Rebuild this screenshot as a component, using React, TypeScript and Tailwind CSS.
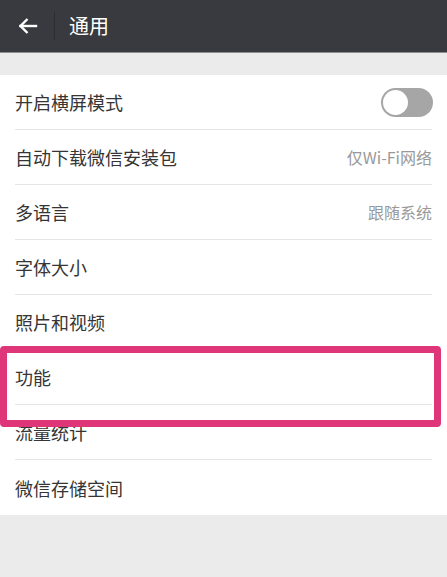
import React from 'react'

interface Row {
  label: string
  value?: string
  toggle?: boolean
}

const rows: Row[] = [
  { label: '开启横屏模式', toggle: true },
  { label: '自动下载微信安装包', value: '仅Wi-Fi网络' },
  { label: '多语言', value: '跟随系统' },
  { label: '字体大小' },
  { label: '照片和视频' },
  { label: '功能' },
  { label: '流量统计' },
  { label: '微信存储空间' },
]

const font = { fontFamily: '"Noto Sans CJK SC", "Noto Sans", sans-serif' }

const App = () => {
  return (
    <div className="w-[447px] h-[577px] bg-[#ebebeb] overflow-hidden" style={font}>
      {/* Header */}
      <div className="h-[53px] bg-[#393a3f] border-b border-[#8e8e8e] flex items-center">
        <div className="w-[54px] flex items-center justify-center pl-[2px]">
          <svg width="20" height="18" viewBox="0 0 20 18" fill="none" stroke="white" strokeWidth={2.4} strokeLinecap="square">
            <path d="M2.5 9h15.5" />
            <path d="M9.5 2 L2.5 9 L9.5 16" strokeLinecap="butt" />
          </svg>
        </div>
        <div className="w-px h-[28px] bg-[#2c2d31]" />
        <span className="ml-[14px] text-[20px] text-white leading-none">通用</span>
      </div>

      {/* List */}
      <div className="relative mt-[22px] bg-white">
        {rows.map((row, i) => (
          <div key={row.label} className="px-[15px]">
            <div
              className={`h-[55px] flex items-center justify-between ${
                i < rows.length - 1 ? 'border-b border-[#e5e5e5]' : ''
              }`}
            >
              <span className="text-[18px] text-[#353535] leading-none">{row.label}</span>
              {row.value && (
                <span className="text-[16px] text-[#999999] leading-none">{row.value}</span>
              )}
              {row.toggle && (
                <div className="w-[52px] h-[29px] rounded-full bg-[#a6a6a6] p-[2px] mr-[-1px]">
                  <div className="w-[25px] h-[25px] rounded-full bg-white" />
                </div>
              )}
            </div>
          </div>
        ))}

        {/* Highlight */}
        <div className="absolute left-0 top-[271px] w-[441px] h-[81px] border-[7px] border-[#df3679] rounded-[4px]" />
      </div>
    </div>
  )
}

export default App
